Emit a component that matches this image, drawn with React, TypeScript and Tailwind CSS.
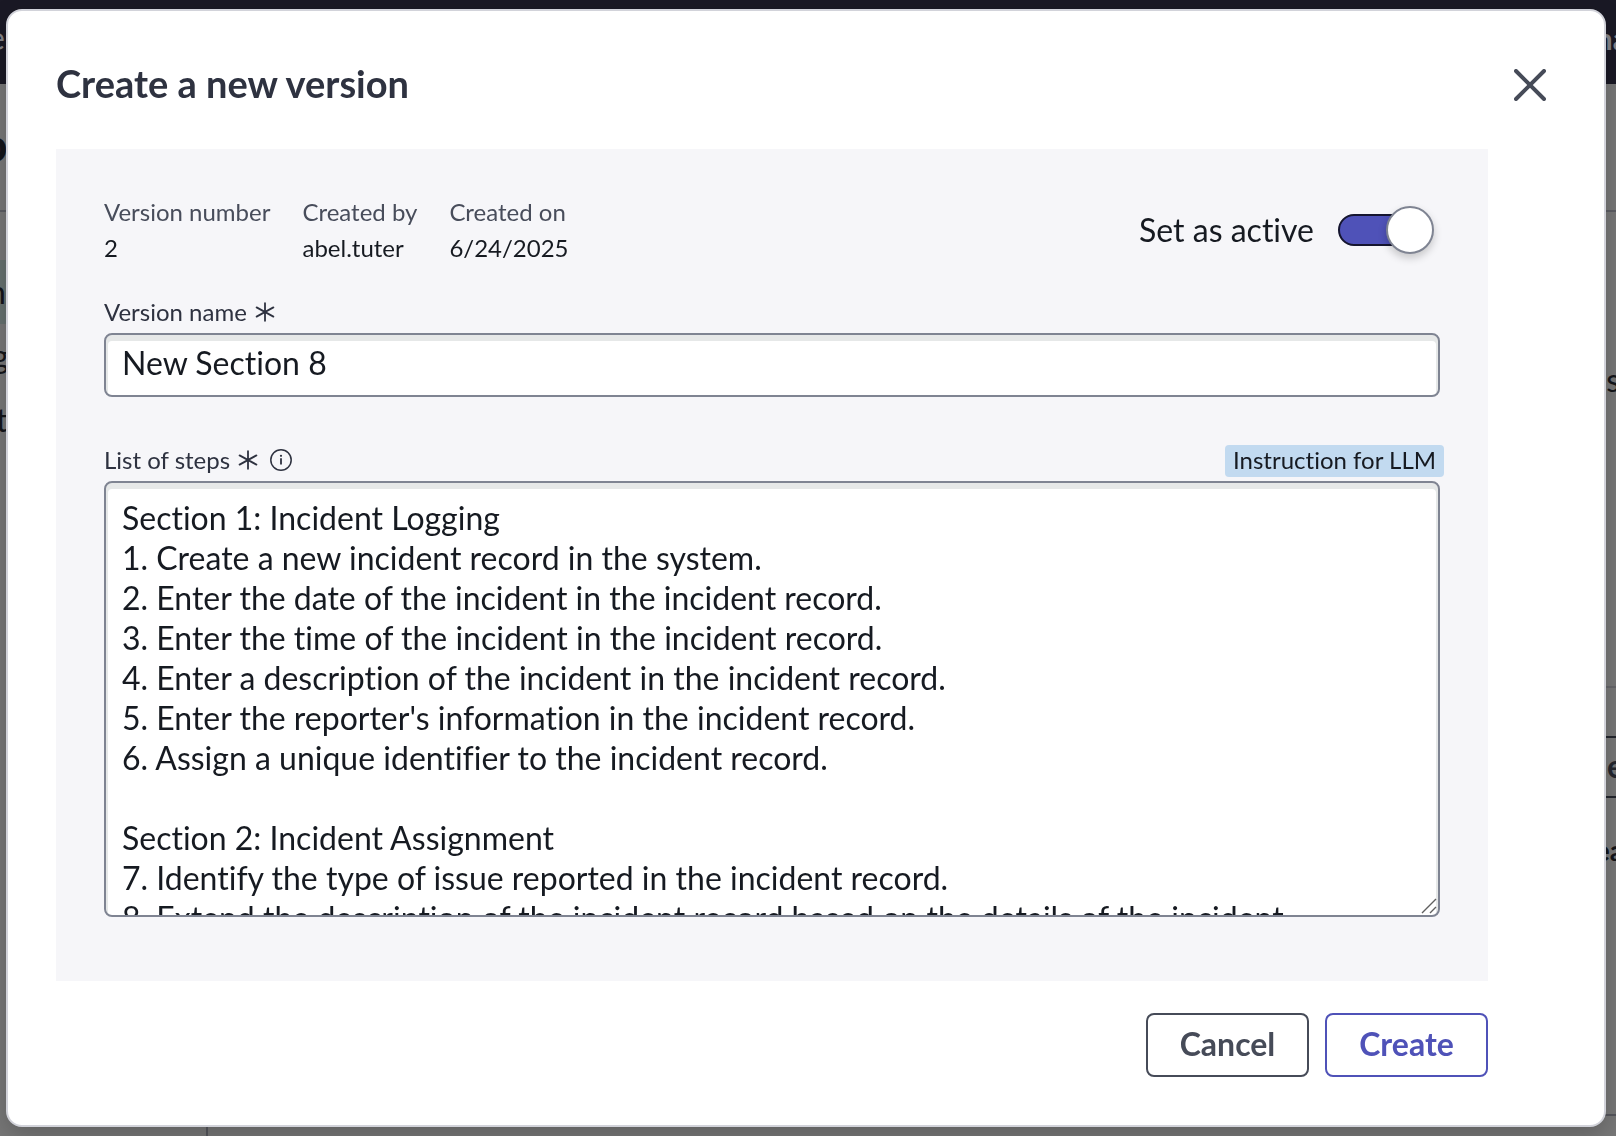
import React, { useState } from "react";

const details = [
  { label: "Version number", value: "2" },
  { label: "Created by", value: "abel.tuter" },
  { label: "Created on", value: "6/24/2025" },
];

const defaultSteps = `Section 1: Incident Logging
1. Create a new incident record in the system.
2. Enter the date of the incident in the incident record.
3. Enter the time of the incident in the incident record.
4. Enter a description of the incident in the incident record.
5. Enter the reporter's information in the incident record.
6. Assign a unique identifier to the incident record.

Section 2: Incident Assignment
7. Identify the type of issue reported in the incident record.
8. Extend the description of the incident record based on the details of the incident`;

const RequiredMark: React.FC = () => (
  <svg
    viewBox="0 0 20 20"
    className="size-5 shrink-0"
    fill="none"
    stroke="currentColor"
    strokeWidth="1.8"
    strokeLinecap="round"
    aria-label="required"
  >
    <path d="M10 1.2v17.6M1.6 5.4l16.8 9.2M18.4 5.4L1.6 14.6" />
  </svg>
);

const InfoIcon: React.FC = () => (
  <svg viewBox="0 0 22 22" className="size-[22px] shrink-0" fill="none" aria-hidden="true">
    <circle cx="11" cy="11" r="10.2" stroke="currentColor" strokeWidth="1.5" />
    <path d="M11 9.2v6.4" stroke="currentColor" strokeWidth="1.8" />
    <circle cx="11" cy="6.8" r="1.1" fill="currentColor" />
  </svg>
);

// Dimmed page behind the dialog
const Backdrop: React.FC = () => (
  <div aria-hidden="true" className="fixed inset-0 flex flex-col overflow-hidden bg-[#777777] text-[32px] leading-10 text-[#14151a]">
    <div className="flex h-[84px] shrink-0 justify-between bg-[#1a1925] pt-[18px] text-[#85858a]">
      <span className="-ml-3">e</span>
      <span className="-mr-3 text-[30px] font-bold">na</span>
    </div>
    <div className="h-32 shrink-0 border-b-2 border-[#5c5d63] pt-8 text-[48px] leading-[56px] font-bold">
      <span className="-ml-5">o</span>
    </div>
    <div className="flex flex-1">
      <div className="w-[208px] border-r-2 border-[#55565c] pt-12">
        <div className="flex h-16 items-center bg-[#66716f]">
          <span className="-ml-3">n</span>
        </div>
        <div className="flex h-16 items-center">
          <span className="-ml-2">g</span>
        </div>
        <div className="flex h-16 items-center">
          <span className="-ml-1">t</span>
        </div>
      </div>
      <div className="flex flex-1 flex-col text-right">
        <div className="h-[476px] border-b-2 border-[#66666a] pt-[148px]">
          <span className="-mr-1">s</span>
        </div>
        <div className="mt-12 h-[62px] border-y-2 border-[#24262e] pt-2 font-bold text-[#24262e]">
          <span className="-mr-2">e</span>
        </div>
        <div className="h-[318px] border-b-2 border-[#55565c] pt-8 text-[28px] font-bold">
          <span className="-mr-2">ea</span>
        </div>
      </div>
    </div>
  </div>
);

const App: React.FC = () => {
  const [active, setActive] = useState(true);
  const [name, setName] = useState("New Section 8");
  const [steps, setSteps] = useState(defaultSteps);

  return (
    <div className="min-h-screen font-['Lato',sans-serif] text-[#161a21] [font-variant-ligatures:none]">
      <Backdrop />

      <div className="relative pt-[9px] pr-2.5 pb-[9px] pl-1.5">
        <div
          role="dialog"
          aria-labelledby="dialog-title"
          className="rounded-2xl border-2 border-[#d2d3da] bg-white pr-[50px] pb-12 pl-12 shadow-[0_8px_24px_rgba(0,0,0,0.2)]"
        >
          {/* Header */}
          <div className="flex items-center justify-between pt-[50px] pb-10">
            <h1 id="dialog-title" className="pb-1 text-[38px] leading-11 font-bold text-[#2e3240]">
              Create a new version
            </h1>
            <button type="button" aria-label="Close" className="flex size-12 items-center justify-center text-[#464b58]">
              <svg viewBox="0 0 32 32" className="size-8" stroke="currentColor" strokeWidth="4" strokeLinecap="round">
                <path d="M2 2l28 28M30 2L2 30" />
              </svg>
            </button>
          </div>

          <div className="mr-[66px]">
            {/* Form */}
            <div className="bg-[#f6f6f9] px-12 pt-[47px] pb-16">
              <div className="flex items-center justify-between">
                <dl className="flex gap-8 text-2xl leading-8">
                  {details.map((item) => (
                    <div key={item.label} className="flex flex-col gap-1">
                      <dt className="text-[#484d5b]">{item.label}</dt>
                      <dd>{item.value}</dd>
                    </div>
                  ))}
                </dl>

                <label className="flex cursor-pointer items-center gap-6 pr-1.5 text-[32px] leading-10">
                  Set as active
                  <span className="relative flex h-12 w-24 items-center">
                    <input
                      type="checkbox"
                      role="switch"
                      checked={active}
                      onChange={(e) => setActive(e.target.checked)}
                      className="peer h-8 w-[88px] appearance-none rounded-full border-2 border-[#15152f] bg-white checked:bg-[#4f52b8]"
                    />
                    <span className="absolute left-0 size-12 rounded-full border-2 border-[#7f8492] bg-white shadow-[0_4px_8px_rgba(0,0,0,0.2)] peer-checked:left-12" />
                  </span>
                </label>
              </div>

              <label htmlFor="version-name" className="mt-8 flex items-center gap-2 text-2xl leading-8 text-[#2e3240]">
                Version name
                <RequiredMark />
              </label>
              <input
                id="version-name"
                type="text"
                value={name}
                onChange={(e) => setName(e.target.value)}
                className="mt-[5px] block h-16 w-full rounded-lg border-2 border-[#7f8492] bg-white px-4 pb-1.5 text-[32px] leading-10 shadow-[inset_0_4px_0_2px_#e6e8e8] outline-none"
              />

              <div className="mt-12 -mr-1 flex items-center justify-between text-2xl leading-[30px]">
                <label htmlFor="steps" className="flex items-center gap-2 pb-0.5 text-[#2e3240]">
                  List of steps
                  <RequiredMark />
                  <span className="pl-1">
                    <InfoIcon />
                  </span>
                </label>
                <span className="rounded bg-[#c2daf0] px-2 pb-0.5">Instruction for LLM</span>
              </div>
              <div className="relative mt-1">
                <textarea
                  id="steps"
                  value={steps}
                  onChange={(e) => setSteps(e.target.value)}
                  className="block h-[436px] w-full resize-none overflow-hidden rounded-lg border-2 border-[#7f8492] bg-white px-4 pt-[15px] text-[32px] leading-10 shadow-[inset_0_4px_0_2px_#e6e8e8] outline-none"
                />
                <svg
                  viewBox="0 0 16 16"
                  className="absolute right-[3px] bottom-[3px] size-4"
                  fill="none"
                  stroke="#5f5f5f"
                  strokeWidth="1.4"
                  aria-hidden="true"
                >
                  <path d="M1 15L15 1M9 15l6-6" />
                </svg>
              </div>
            </div>

            {/* Actions */}
            <div className="mt-8 flex justify-end gap-4 text-[32px] leading-10 font-bold">
              <button type="button" className="h-16 w-[163px] rounded-lg border-2 border-[#464b58] pb-0.5 text-[#464b58]">
                Cancel
              </button>
              <button type="button" className="h-16 w-[163px] rounded-lg border-2 border-[#4f52b8] pb-0.5 text-[#4f52b8]">
                Create
              </button>
            </div>
          </div>
        </div>
      </div>
    </div>
  );
};

export default App;
